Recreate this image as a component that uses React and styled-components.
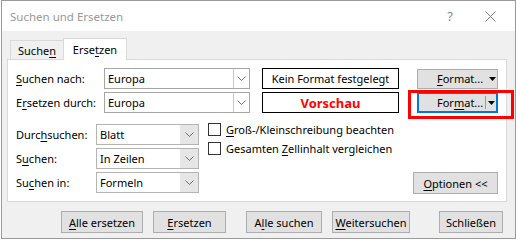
import React from 'react';
import styled, { createGlobalStyle } from 'styled-components';

const GlobalStyle = createGlobalStyle`
  html, body {
    margin: 0;
    padding: 0;
    background: #ffffff;
  }
  body {
    font-family: 'Noto Sans', 'Open Sans', sans-serif;
    font-size: 11px;
    color: #000;
  }
`;

const Window = styled.div`
  margin-left: 1px;
  width: 513px;
  height: 237px;
  border: 1px solid #9a9a9a;
  background: #f0f0f0;
  display: flex;
  flex-direction: column;
  position: relative;
`;

const TitleBar = styled.div`
  height: 30px;
  background: #ffffff;
  display: flex;
  align-items: center;
  padding-left: 8px;
`;

const Title = styled.div`
  flex: 1;
  color: #999999;
  font-size: 11.5px;
`;

const TitleIcon = styled.div`
  width: ${p => p.w}px;
  display: flex;
  align-items: center;
  justify-content: center;
  color: #8a8a8a;
  font-size: 13px;
`;

const Body = styled.div`
  padding: 0 8px 0 5px;
  display: flex;
  flex-direction: column;
`;

const TabStrip = styled.div`
  height: 28px;
  display: flex;
  align-items: flex-end;
  padding-left: 3px;
`;

const Tab = styled.div`
  height: ${p => (p.active ? 22 : 19)}px;
  width: ${p => p.w}px;
  box-sizing: border-box;
  display: flex;
  align-items: center;
  justify-content: center;
  background: ${p => (p.active ? '#ffffff' : '#f0f0f0')};
  border: 1px solid #d9d9d9;
  border-bottom: none;
  border-right: ${p => (p.active ? '1px solid #d9d9d9' : 'none')};
  margin-bottom: ${p => (p.active ? '-1px' : '0')};
  position: relative;
  z-index: ${p => (p.active ? 1 : 0)};
`;

const Panel = styled.div`
  background: #ffffff;
  border: 1px solid #d9d9d9;
  height: 143px;
  padding: 8px 7px 0 8px;
  box-sizing: border-box;
  display: flex;
  flex-direction: column;
`;

const TopGrid = styled.div`
  display: grid;
  grid-template-columns: 88px 146px 149px 99px;
  grid-auto-rows: 21px;
  row-gap: 3px;
  align-items: center;
`;

const Label = styled.div`
  white-space: nowrap;
`;

const Ul = styled.span`
  text-decoration: underline;
  text-underline-offset: 2px;
`;

const Combo = styled.div`
  height: 21px;
  box-sizing: border-box;
  border: 1px solid ${p => (p.list ? '#b4b4b4' : '#a6a6a6')};
  background: #ffffff;
  display: flex;
  align-items: stretch;
`;

const ComboText = styled.div`
  flex: 1;
  display: flex;
  align-items: center;
  padding-left: 3px;
`;

const ComboArrow = styled.div`
  width: ${p => (p.list ? 17 : 15)}px;
  display: flex;
  align-items: center;
  justify-content: center;
  background: ${p => (p.list ? '#e6e6e6' : '#ffffff')};
  border-left: 1px solid ${p => (p.list ? '#e6e6e6' : '#c8c8c8')};
`;

const PreviewBox = styled.div`
  height: 21px;
  width: 137px;
  margin-left: 12px;
  box-sizing: border-box;
  border: 1px solid #000000;
  display: flex;
  align-items: center;
  justify-content: center;
  color: ${p => (p.red ? '#ff0000' : '#000000')};
  font-weight: ${p => (p.red ? 700 : 400)};
  font-size: ${p => (p.red ? 13 : 11)}px;
`;

const Button = styled.div`
  height: ${p => p.h || 22}px;
  width: ${p => p.w}px;
  margin-left: ${p => p.ml || 0}px;
  box-sizing: border-box;
  background: #e1e1e1;
  border: ${p => (p.focus ? '2px solid #0078d7' : '1px solid #adadad')};
  display: flex;
  align-items: center;
  justify-content: center;
  white-space: nowrap;
  position: relative;
`;

const SplitButton = styled(Button)`
  justify-content: flex-start;
  padding-left: ${p => (p.focus ? 18 : 19)}px;
`;

const SplitArrow = styled.div`
  position: absolute;
  right: 0;
  top: 0;
  bottom: 0;
  width: 10px;
  display: flex;
  align-items: center;
  justify-content: center;
  border-left: ${p => (p.sep ? '1px solid #9a9a9a' : 'none')};
  margin: ${p => (p.sep ? '2px 0' : '0')};
`;

const Highlight = styled.div`
  position: absolute;
  left: -9px;
  right: -16px;
  top: -2px;
  bottom: -6px;
  border: 3px solid #ff0000;
  pointer-events: none;
`;

const FocusWrap = styled.div`
  position: relative;
  margin-left: 18px;
`;

const LowerSection = styled.div`
  display: flex;
  margin-top: 11px;
`;

const LowerGrid = styled.div`
  display: grid;
  grid-template-columns: 80px 103px;
  grid-auto-rows: 21px;
  row-gap: 3px;
  align-items: center;
`;

const CheckColumn = styled.div`
  flex: 1;
  margin-left: 9px;
  margin-top: -2px;
  display: flex;
  flex-direction: column;
  gap: 4px;
`;

const CheckRow = styled.div`
  height: 15px;
  display: flex;
  align-items: center;
  gap: 5px;
  white-space: nowrap;
`;

const CheckBox = styled.div`
  width: 13px;
  height: 13px;
  box-sizing: border-box;
  border: 1px solid #333333;
  background: #ffffff;
`;

const OptionsWrap = styled.div`
  align-self: flex-end;
  margin-right: 1px;
  margin-bottom: -1px;
`;

const ButtonBar = styled.div`
  display: flex;
  padding: 9px 0 0 54px;
`;

const Chevron = () => (
  <svg width="9" height="5" viewBox="0 0 9 5">
    <path d="M0.5 0.5 L4.5 4.5 L8.5 0.5" fill="none" stroke="#6d6d6d" strokeWidth="1" />
  </svg>
);

const Tri = () => (
  <svg width="7" height="4" viewBox="0 0 7 4">
    <path d="M0 0 H7 L3.5 4 Z" fill="#000" />
  </svg>
);

function ComboBox({ value, list }) {
  return (
    <Combo list={list}>
      <ComboText>{value}</ComboText>
      <ComboArrow list={list}>
        <Chevron />
      </ComboArrow>
    </Combo>
  );
}

export default function App() {
  return (
    <>
      <GlobalStyle />
      <Window>
        <TitleBar>
          <Title>Suchen und Ersetzen</Title>
          <TitleIcon w={34}>?</TitleIcon>
          <TitleIcon w={46}>
            <svg width="11" height="11" viewBox="0 0 11 11">
              <path d="M0.5 0.5 L10.5 10.5 M10.5 0.5 L0.5 10.5" stroke="#7a7a7a" strokeWidth="1" />
            </svg>
          </TitleIcon>
          <div style={{ width: 2 }} />
        </TitleBar>
        <Body>
          <TabStrip>
            <Tab w={53}>
              Suche<Ul>n</Ul>
            </Tab>
            <Tab active w={64}>
              Erse<Ul>t</Ul>zen
            </Tab>
          </TabStrip>
          <Panel>
            <TopGrid>
              <Label>
                <Ul>S</Ul>uchen nach:
              </Label>
              <ComboBox value="Europa" />
              <PreviewBox>Kein Format festgelegt</PreviewBox>
              <SplitButton w={81} h={20} ml={18}>
                <span>
                  <Ul>F</Ul>ormat...
                </span>
                <SplitArrow>
                  <Tri />
                </SplitArrow>
              </SplitButton>

              <Label>
                E<Ul>r</Ul>setzen durch:
              </Label>
              <ComboBox value="Europa" />
              <PreviewBox red>Vorschau</PreviewBox>
              <FocusWrap>
                <SplitButton w={81} h={21} focus>
                  <span>
                    For<Ul>m</Ul>at...
                  </span>
                  <SplitArrow sep>
                    <Tri />
                  </SplitArrow>
                </SplitButton>
                <Highlight />
              </FocusWrap>
            </TopGrid>

            <LowerSection>
              <LowerGrid>
                <Label>
                  Durc<Ul>h</Ul>suchen:
                </Label>
                <ComboBox value="Blatt" list />
                <Label>
                  S<Ul>u</Ul>chen:
                </Label>
                <ComboBox value="In Zeilen" list />
                <Label>
                  Su<Ul>c</Ul>hen in:
                </Label>
                <ComboBox value="Formeln" list />
              </LowerGrid>
              <CheckColumn>
                <CheckRow>
                  <CheckBox />
                  <span>
                    <Ul>G</Ul>roß-/Kleinschreibung beachten
                  </span>
                </CheckRow>
                <CheckRow>
                  <CheckBox />
                  <span>
                    Gesamten <Ul>Z</Ul>ellinhalt vergleichen
                  </span>
                </CheckRow>
              </CheckColumn>
              <OptionsWrap>
                <Button w={85} h={22}>
                  <span>
                    <Ul>O</Ul>ptionen &lt;&lt;
                  </span>
                </Button>
              </OptionsWrap>
            </LowerSection>
          </Panel>
          <ButtonBar>
            <Button w={82}>
              <span>
                <Ul>A</Ul>lle ersetzen
              </span>
            </Button>
            <Button w={73} ml={10}>
              <span>
                <Ul>E</Ul>rsetzen
              </span>
            </Button>
            <Button w={76} ml={20}>
              <span>
                A<Ul>l</Ul>le suchen
              </span>
            </Button>
            <Button w={78} ml={10}>
              <span>
                <Ul>W</Ul>eitersuchen
              </span>
            </Button>
            <Button w={64} ml={29}>
              <span>Schließen</span>
            </Button>
          </ButtonBar>
        </Body>
      </Window>
    </>
  );
}
